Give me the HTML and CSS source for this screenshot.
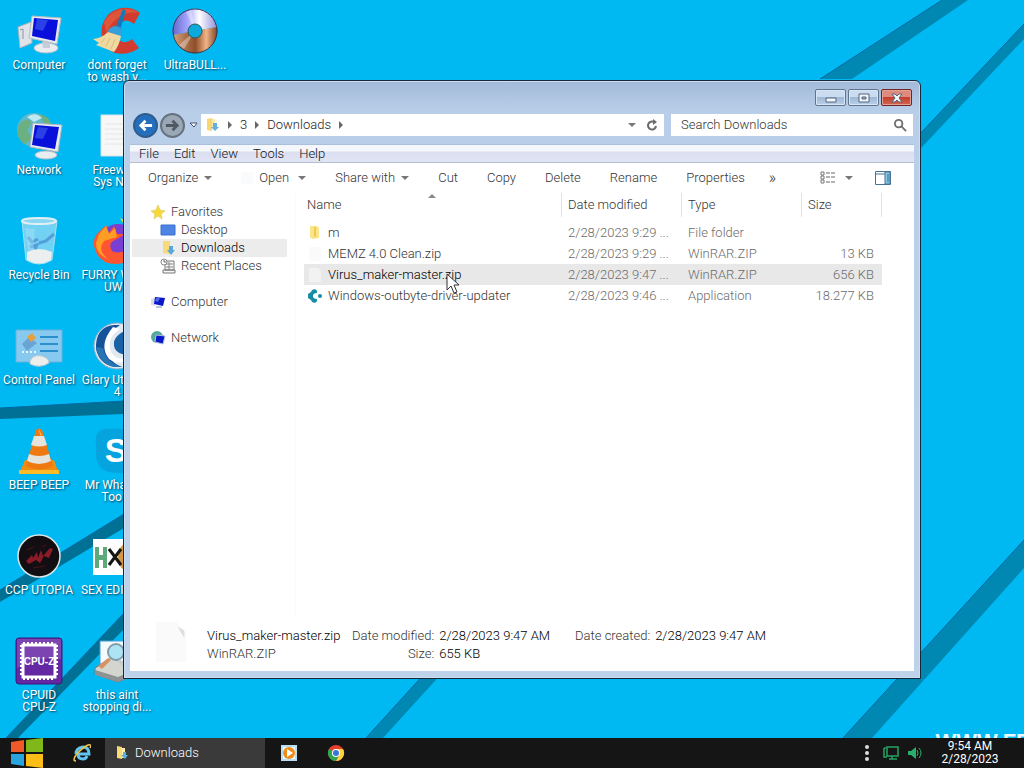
FILE: index.html
```html
<!DOCTYPE html>
<html lang="en">
  <head>
    <meta charset="UTF-8" />
    <meta name="viewport" content="width=device-width, initial-scale=1.0" />
    <title>Downloads</title>
    <link rel="stylesheet" href="styles.css">
  </head>
  <body>
    <main class="desktop">
      <svg class="wallpaper" viewBox="0 0 1024 738" preserveAspectRatio="none" aria-hidden="true">
        <g fill="#0088b3">
          <path d="M942 0H968L852 79H820Z" />
          <path d="M1024 24V39L922 147L900 170V155Z" />
          <path d="M1024 540V568L872 738H843Z" />
          <path d="M426 672H443L383 738H366Z" />
        </g>
        <g fill="#007195">
          <path d="M0 408L124 401V414L0 419Z" />
          <path d="M124 514V528L0 602V590Z" />
          <path d="M124 613V629L18 738H6Z" />
        </g>
        <g fill="none" stroke="#0069a5" stroke-width="1">
          <path d="M942 0L820 79M1024 24L900 155M1024 540L843 738M426 672L366 738M0 408L124 401M124 514L0 590M124 613L6 738" />
        </g>
      </svg>
      <div class="watermark">WWW.FR</div>

      <div class="icons">
        <a class="shortcut" href="#">
          <svg viewBox="0 0 48 48"><path d="M3 20L16 15L17 36L5 41Z" fill="#dfe3e8" stroke="#a9b4c0" /><path d="M5 23L8 22V32" stroke="#8897a8" fill="none" /><ellipse cx="31" cy="41" rx="12" ry="5" fill="#e9edf1" stroke="#b5c1cc" /><path d="M27 33L35 35V41H28Z" fill="#c5ced8" /><path d="M17 9L46 11L42 37L14 31Z" fill="#e8ebee" stroke="#b5bcc5" /><path d="M19 11L43 13L40 34L17 29Z" fill="#0a10db" /><path d="M22 12L33 13L28 24L20 22Z" fill="#4260ee" opacity=".6" /></svg>
          <span>Computer</span>
        </a>
        <a class="shortcut" href="#">
          <svg viewBox="0 0 48 48"><circle cx="19" cy="18" r="17" fill="#5db9c9" /><path d="M5 11C15 4 20 9 12 18L17 27L9 32C3 27 0 19 5 11ZM24 2C36 5 37 11 35 16L28 10Z" fill="#6caf81" /><path d="M12 5Q20 -1 27 6L19 10Z" fill="#d9f5ff" opacity=".8" /><ellipse cx="31" cy="43" rx="11" ry="4" fill="#e8edf0" stroke="#b2beca" /><path d="M18 11L47 13L43 40L15 35Z" fill="#e9ecee" stroke="#abb6bf" /><path d="M20 13L44 15L40 37L17 33Z" fill="#0910d9" /><path d="M23 15L33 16L28 27L20 26Z" fill="#4260ee" opacity=".6" /></svg>
          <span>Network</span>
        </a>
        <a class="shortcut" href="#">
          <svg viewBox="0 0 48 48"><path d="M7 4L11 43Q24 51 37 43L42 4Z" fill="#90d7f4" opacity=".8" stroke="#c9eaf5" /><path d="M12 35Q24 29 37 35L36 43Q24 50 12 43Z" fill="#eceff0" /><path d="M13 20L17 25L23 22M24 26L31 24L39 17M15 30L22 28L20 32" fill="none" stroke="#4c92d3" stroke-width="3" opacity=".8" /><path d="M10 11L20 12L18 34L13 33Z" fill="#b9e7f8" opacity=".35" /><ellipse cx="24" cy="4" rx="17" ry="3" fill="#8bd7f2" stroke="#e0eff4" stroke-width="2" /></svg>
          <span>Recycle Bin</span>
        </a>
        <a class="shortcut" href="#">
          <svg viewBox="0 0 48 48"><path d="M1 8H47V40H1Z" fill="#88c9ef" stroke="#67b1df" /><path d="M7 22L14 15L22 21L12 29Z" fill="#6aa4d5" /><path d="M12 15L17 11L21 16L16 20Z" fill="#e8a03a" /><path d="M25 15H43M25 22H43M25 29H43" stroke="#2990cd" stroke-width="2" /><path d="M7 30H22" stroke="#e4f5ff" stroke-width="2" stroke-dasharray="2 2" /><path d="M15 39Q18 32 27 34Q34 36 34 41Q25 47 15 42Z" fill="#eceeec" stroke="#b6c8d0" /></svg>
          <span>Control Panel</span>
        </a>
        <a class="shortcut" href="#">
          <svg viewBox="0 0 48 48"><path d="M10 33H39L44 47H4Z" fill="#f08e13" /><path d="M4 43H44V47H4Z" fill="#ffba28" /><path d="M21 3Q24 0 27 3L38 39Q25 46 11 39Z" fill="#ed7910" /><path d="M19 9H29L32 18Q24 21 16 18ZM14 27Q24 31 34 27L36 34Q24 40 12 34Z" fill="#e6e2dc" /><path d="M24 2L27 9L25 8Z" fill="#ffc05a" /></svg>
          <span>BEEP BEEP</span>
        </a>
        <a class="shortcut" href="#">
          <svg viewBox="0 0 48 48"><circle cx="24" cy="24" r="21" fill="#130e11" stroke="#dbe5e9" stroke-width="1.5" /><path d="M11 29L17 23L18 26L22 20L23 26L26 18L28 24L35 16L38 17L34 26L29 24L25 31L21 28L14 32Z" fill="#8a1c27" /><path d="M12 18L19 15M27 15L31 13M18 36L30 34" stroke="#4b141e" /></svg>
          <span>CCP UTOPIA</span>
        </a>
        <a class="shortcut" href="#">
          <svg viewBox="0 0 48 48"><rect x="1" y="1" width="46" height="46" rx="3" fill="#6429a2" stroke="#3c1678" /><path d="M2 2H46V22Q20 19 2 31Z" fill="#8a57bb" opacity=".6" /><rect x="8" y="8" width="32" height="32" fill="none" stroke="#fff" stroke-width="3" /><path d="M8 6H40M8 42H40M6 8V40M42 8V40" stroke="#fff" stroke-width="2" stroke-dasharray="2 2" /><text x="24" y="28" class="cpu-text">CPU-Z</text></svg>
          <span>CPUID<br>CPU-Z</span>
        </a>
        <a class="shortcut" href="#">
          <svg viewBox="0 0 48 48"><path d="M47 6L41 17Q33 10 26 17Q19 26 26 33Q33 38 39 32L46 41Q35 49 22 46Q6 40 9 19Q14 3 29 1Q40 0 47 6Z" fill="#d13c2e" /><path d="M11 15Q17 4 30 2Q39 1 45 6Q34 4 25 11Q15 18 14 28Z" fill="#de5539" /><path d="M30 2L33 4L27 23L22 22Z" fill="#1479bc" /><path d="M16 22Q22 16 29 22L28 29L15 25Z" fill="#359fda" /><path d="M15 25L28 29Q26 39 21 45L3 38L6 36L0 32Q9 31 15 25Z" fill="#efd9a0" /><path d="M12 31L8 36M17 31L13 39M22 32L18 42" stroke="#d7bd81" /></svg>
          <span>dont forget<br>to wash y...</span>
        </a>
        <a class="shortcut" href="#">
          <svg viewBox="0 0 48 48"><path d="M8 3H40V44H8Z" fill="#f7f7f7" stroke="#d5e4e9" /><path d="M12 12H36M12 17H33M12 22H36M12 27H35M12 32H34" stroke="#e6e6e6" /></svg>
          <span>Freeware<br>Sys Note</span>
        </a>
        <a class="shortcut" href="#">
          <svg viewBox="0 0 48 48"><circle cx="25" cy="26" r="19" fill="#793fd2" /><path d="M27 1Q44 8 43 25L34 12Z" fill="#ffd72c" /><path d="M5 16L13 8L16 16L21 9L24 17L32 17Q28 20 20 24Q15 27 19 34Q31 40 44 22Q45 44 25 47Q5 48 1 29Q0 21 5 16Z" fill="#ff5631" /><path d="M6 17L13 9L16 17L22 11L24 20L11 24Q3 35 17 43Q3 38 3 26Z" fill="#ff9e25" /></svg>
          <span>FURRY WEBS<br>UWU</span>
        </a>
        <a class="shortcut" href="#">
          <svg viewBox="0 0 48 48"><circle cx="24" cy="24" r="23" fill="#e0e9ef" stroke="#8db1cc" /><path d="M21 3Q2 5 3 27Q7 46 29 45Q11 38 14 20Q17 9 27 3Z" fill="#155299" /><path d="M3 25Q6 41 20 45L29 45Q13 41 10 26Z" fill="#2776b4" /><path d="M27 7Q13 16 18 30Q24 40 40 35Q27 45 16 37Q5 23 20 5Z" fill="#fff" /><path d="M34 8Q17 15 22 27Q28 36 42 30Q45 17 34 8Z" fill="#1762a5" /></svg>
          <span>Glary Utilities<br>4</span>
        </a>
        <a class="shortcut" href="#">
          <svg viewBox="0 0 48 48"><path d="M3 18Q0 0 19 2Q46 0 46 24Q50 48 27 46Q3 47 3 27Z" fill="#06a4df" /><text x="23" y="35" class="skype-text">S</text></svg>
          <span>Mr Whatsap<br>Too P</span>
        </a>
        <a class="shortcut" href="#">
          <svg viewBox="0 0 48 48"><path d="M0 7H48V43H0Z" fill="#fff" /><path d="M2 15H6V23H10V15H14V36H10V28H6V36H2Z" fill="#5ea979" /><ellipse cx="33" cy="25" rx="8" ry="13" fill="#d69642" /><path d="M16 17L28 33M28 17L16 33" stroke="#151515" stroke-width="3" /></svg>
          <span>SEX EDITORS</span>
        </a>
        <a class="shortcut" href="#">
          <svg viewBox="0 0 48 48"><path d="M7 4H40V27H7Z" fill="#f5faff" stroke="#3f9dd7" /><path d="M2 31L18 21L44 30V37L25 45L2 37Z" fill="#d5d5cf" stroke="#777" /><path d="M2 33L25 40L44 32V37L25 45L2 38Z" fill="#8f9294" /><path d="M5 29L15 21L18 23L9 32Z" fill="#d69466" /><circle cx="23" cy="15" r="8" fill="#ace4f5" stroke="#829da9" stroke-width="2" /><path d="M26 23L36 34" stroke="#c5cbd0" stroke-width="3" /></svg>
          <span>this aint<br>stopping di...</span>
        </a>
        <a class="shortcut" href="#">
          <svg viewBox="0 0 48 48"><defs><linearGradient id="disc-top" x1="0" x2="1"><stop stop-color="#6569ce" /><stop offset=".35" stop-color="#a8a8ff" /><stop offset=".6" stop-color="#fff" /><stop offset="1" stop-color="#9291e0" /></linearGradient><linearGradient id="disc-low" x1="0" x2="1"><stop stop-color="#d4a17d" /><stop offset=".5" stop-color="#8e4d28" /><stop offset=".75" stop-color="#f1b486" /><stop offset="1" stop-color="#7c4429" /></linearGradient></defs><path d="M2 28A22 22 0 1 1 46 20Z" fill="url(#disc-top)" /><path d="M2 28A22 22 0 0 0 46 20Z" fill="url(#disc-low)" /><path d="M24 24L15 5L20 3ZM24 24L8 38L13 42Z" fill="#fff" opacity=".35" /><circle cx="24" cy="24" r="22" fill="none" stroke="#34374d" /><circle cx="24" cy="24" r="7" fill="#0aabdc" stroke="#355" /></svg>
          <span>UltraBULL...</span>
        </a>
      </div>

      <section class="window" aria-label="Downloads">
        <header class="titlebar">
          <button class="win-btn" aria-label="Minimize"><svg viewBox="0 0 12 12"><path d="M1 6H11V10H1Z" /></svg></button>
          <button class="win-btn" aria-label="Maximize"><svg viewBox="0 0 12 12"><path d="M1 2H11V10H1ZM4 5H8V7H4Z" /></svg></button>
          <button class="win-btn close" aria-label="Close"><svg viewBox="0 0 12 12"><path d="M1 2H4L6 4L8 2H11L8 6L11 10H8L6 8L4 10H1L4 6Z" /></svg></button>
        </header>

        <div class="navbar">
          <button class="round back" aria-label="Back"><svg viewBox="0 0 16 16"><path d="M15 8H3M8 3L3 8L8 13" /></svg></button>
          <button class="round forward" aria-label="Forward"><svg viewBox="0 0 16 16"><path d="M1 8H13M8 3L13 8L8 13" /></svg></button>
          <button class="recent" aria-label="Recent pages"><svg viewBox="0 0 9 6"><path d="M1 1H8L5 5Z" fill="#fff" stroke="#41536d" /></svg></button>
          <div class="address">
            <svg class="small-icon" viewBox="0 0 16 16"><path d="M3 2L8 1V14L3 13Z" fill="#f5d873" /><path d="M8 2H11V10H8Z" fill="#f8e8a4" /><path d="M9 6H13V10H15L11 14L7 10H9Z" fill="#66aee0" /></svg>
            <i class="tri-right"></i>
            <button>3</button>
            <i class="tri-right"></i>
            <button>Downloads</button>
            <i class="tri-right"></i>
            <span class="spacer"></span>
            <i class="tri-down"></i>
            <button class="refresh" aria-label="Refresh"><svg viewBox="0 0 12 12"><path d="M8 3A4 4 0 1 0 10 7" fill="none" stroke="#6b6b6b" stroke-width="2" /><path d="M7 0L11 3L7 6Z" fill="#6b6b6b" /></svg></button>
          </div>
          <label class="search">
            <input type="text" placeholder="Search Downloads" aria-label="Search Downloads" />
            <svg viewBox="0 0 14 14"><circle cx="5" cy="5" r="4" /><path d="M8 8L13 13" /></svg>
          </label>
        </div>

        <nav class="menubar">
          <button>File</button>
          <button>Edit</button>
          <button>View</button>
          <button>Tools</button>
          <button>Help</button>
        </nav>

        <div class="content">
          <div class="toolbar">
            <button>Organize <i class="tri-down"></i></button>
            <button><span class="blank-icon"></span>Open <i class="tri-down open-arrow"></i></button>
            <button>Share with <i class="tri-down"></i></button>
            <button>Cut</button>
            <button>Copy</button>
            <button>Delete</button>
            <button>Rename</button>
            <button>Properties</button>
            <button class="more" aria-label="More">»</button>
            <span class="spacer"></span>
            <button class="views" aria-label="Change your view"><svg viewBox="0 0 16 14" width="16" height="14"><path d="M1 1H4V4H1ZM1 5H4V8H1ZM1 9H4V12H1Z" fill="none" stroke="#777" /><path d="M6 2H10M11 2H15M6 6H10M11 6H15M6 11H10M11 11H15" stroke="#666" /></svg><i class="tri-down"></i></button>
            <button aria-label="Show the preview pane"><svg viewBox="0 0 16 14" width="16" height="14"><path d="M.5 .5H15.5V13.5H.5Z" fill="#fff" stroke="#477393" /><path d="M1 3H10" stroke="#477393" /><path d="M10 1H15V13H10Z" fill="#88c8e7" stroke="#477393" /><path d="M13 3V11" stroke="#2e6c98" /></svg></button>
          </div>

          <div class="panes">
            <aside class="sidebar">
              <a href="#"><svg class="small-icon" viewBox="0 0 16 16"><path d="M8 1L10 6L15 7L11 10L12 15L8 12L4 15L5 10L1 7L6 6Z" fill="#f7d936" stroke="#ead377" /></svg>Favorites</a>
              <a class="sub" href="#"><svg class="small-icon" viewBox="0 0 16 16"><path d="M1 3H15V13H1Z" fill="#4f83e4" stroke="#3770d0" /></svg>Desktop</a>
              <a class="sub selected" href="#"><svg class="small-icon" viewBox="0 0 16 16"><path d="M3 1H10V14L3 13Z" fill="#f8da7c" /><path d="M9 6H13V10H15L11 15L7 10H9Z" fill="#59a8dd" /></svg>Downloads</a>
              <a class="sub" href="#"><svg class="small-icon" viewBox="0 0 16 16"><path d="M5 3H14V12H5ZM3 12H15V15H3Z" fill="#f5f5f5" stroke="#777" /><path d="M6 6H13M6 9H13M9 4V12" stroke="#888" /><circle cx="4" cy="4" r="3" fill="#fff" stroke="#888" /><path d="M4 2V4H6" fill="none" stroke="#666" /></svg>Recent Places</a>
              <a class="group" href="#"><svg class="small-icon" viewBox="0 0 16 16"><path d="M1 5L5 4V12L1 11Z" fill="#d8dde5" /><path d="M5 3L15 4L13 12L4 10Z" fill="#0a16c9" /><path d="M6 4L10 4L8 8L5 7Z" fill="#4a67e4" /><path d="M6 13H12" stroke="#bcc8d5" stroke-width="2" /></svg>Computer</a>
              <a class="group" href="#"><svg class="small-icon" viewBox="0 0 16 16"><circle cx="7" cy="7" r="6" fill="#55a99b" /><path d="M6 5L15 6L13 14L5 12Z" fill="#0a16c9" stroke="#aec0dd" /></svg>Network</a>
            </aside>

            <div class="files">
              <table>
                <colgroup><col class="col-name" /><col class="col-date" /><col class="col-type" /><col class="col-size" /></colgroup>
                <thead>
                  <tr><th class="sorted">Name</th><th>Date modified</th><th>Type</th><th>Size</th></tr>
                </thead>
                <tbody>
                  <tr><td><span class="file"><svg class="small-icon" viewBox="0 0 16 16"><path d="M3 1H10L12 3V13L5 14L3 12Z" fill="#fbe58b" /><path d="M7 2H9V12H7Z" fill="#eecb50" /></svg>m</span></td><td>2/28/2023 9:29 ...</td><td>File folder</td><td></td></tr>
                  <tr><td><span class="file"><svg class="small-icon" viewBox="0 0 16 16"><path d="M2 1H12L14 3V15H2Z" fill="#fafafa" /></svg>MEMZ 4.0 Clean.zip</span></td><td>2/28/2023 9:29 ...</td><td>WinRAR.ZIP</td><td>13 KB</td></tr>
                  <tr class="selected"><td><span class="file"><svg class="small-icon" viewBox="0 0 16 16"><path d="M2 1H11L14 4V15H2Z" fill="#f2f2f2" /></svg>Virus_maker-master.zip</span></td><td>2/28/2023 9:47 ...</td><td>WinRAR.ZIP</td><td>656 KB</td></tr>
                  <tr><td><span class="file"><svg class="small-icon" viewBox="0 0 16 16"><path d="M8 1L10 3V5Q6 5 6 8Q6 11 10 11V13L8 15L5 14L4 12L1 10V6L4 4L5 2Z" fill="#168da5" /><circle cx="13" cy="8" r="2" fill="#168da5" /></svg>Windows-outbyte-driver-updater</span></td><td>2/28/2023 9:46 ...</td><td>Application</td><td>18.277 KB</td></tr>
                </tbody>
              </table>
            </div>
          </div>

          <footer class="details">
            <svg class="preview" viewBox="0 0 32 42"><path d="M0 0H22L32 12V42H0Z" fill="#fafafa" /><path d="M23 5L30 9V17Z" fill="#ddd" /></svg>
            <div class="detail-grid">
              <b>Virus_maker-master.zip</b><span class="key">Date modified:</span><b>2/28/2023 9:47 AM</b><span class="key created">Date created:</span><b>2/28/2023 9:47 AM</b>
              <span>WinRAR.ZIP</span><span class="key">Size:</span><b>655 KB</b>
            </div>
          </footer>
        </div>
      </section>

      <svg class="cursor" viewBox="0 0 14 22" aria-hidden="true"><path d="M1 1V17L5 13L8 20L11 19L8 12H13Z" fill="#fff" stroke="#333" /></svg>
    </main>

    <footer class="taskbar">
      <button class="start" aria-label="Start"><svg viewBox="0 0 32 30"><path d="M0 4L13 2V14H0Z" fill="#f05a28" /><path d="M15 2L32 0V14H15Z" fill="#80b719" /><path d="M0 16H13V28L0 26Z" fill="#29a4dd" /><path d="M15 16H32V30L15 28Z" fill="#fcbd16" /></svg></button>
      <button class="launch" aria-label="Internet Explorer"><svg viewBox="0 0 18 18"><path d="M14 12Q13 15 10 15Q5 15 5 10H16Q16 3 10 3Q3 4 3 10" fill="none" stroke="#63c4f0" stroke-width="3" /><path d="M3 17Q-1 17 3 11Q9 4 15 1Q19 0 17 4" fill="none" stroke="#f5c645" stroke-width="1.5" /></svg></button>
      <button class="task"><svg class="small-icon" viewBox="0 0 16 16"><path d="M3 1L8 2V14L3 13Z" fill="#f9db75" /><path d="M8 3H11V13H8Z" fill="#ffeeae" /><path d="M9 7H12V10H14L11 14L7 10H9Z" fill="#5aaee0" /></svg>Downloads</button>
      <button class="launch" aria-label="Media Player"><svg viewBox="0 0 18 18"><path d="M1 1H17V17H1Z" fill="#b9ddf4" /><path d="M3 3H15V15H3Z" fill="#f6fbff" /><circle cx="9" cy="9" r="6" fill="#ed8d18" /><path d="M7 5L13 9L7 13Z" fill="#fff" /></svg></button>
      <button class="launch" aria-label="Chrome"><svg viewBox="0 0 18 18"><circle cx="9" cy="9" r="8" fill="#e5402f" /><path d="M9 9L2 5A8 8 0 0 0 9 17L12 11Z" fill="#30a653" /><path d="M9 9V5H16A8 8 0 0 1 9 17L13 10Z" fill="#ffd13d" /><circle cx="9" cy="9" r="4" fill="#fff" /><circle cx="9" cy="9" r="3" fill="#3675d9" /></svg></button>
      <span class="spacer"></span>
      <button class="tray" aria-label="Hidden icons"><svg viewBox="0 0 16 18"><g fill="#ddd"><circle cx="8" cy="3" r="2" /><circle cx="8" cy="9" r="2" /><circle cx="8" cy="15" r="2" /></g></svg></button>
      <button class="tray" aria-label="Network"><svg viewBox="0 0 16 18"><path d="M4 3H15V12H4ZM9 12V15M6 15H14M1 4V13H4M1 4H3" fill="none" stroke="#23a260" stroke-width="1.5" /></svg></button>
      <button class="tray" aria-label="Volume"><svg viewBox="0 0 16 18"><path d="M1 7H4L9 3V15L4 11H1Z" fill="#2aaf68" /><path d="M10 6Q12 9 10 12M12 4Q16 9 12 14" fill="none" stroke="#2aaf68" /></svg></button>
      <button class="clock">9:54 AM<br>2/28/2023</button>
    </footer>
  </body>
</html>
```

FILE: styles.css
```css
* {
  box-sizing: border-box;
}

body {
  margin: 0;
  height: 100vh;
  display: grid;
  grid-template-rows: 1fr 30px;
  overflow: hidden;
  font: 300 13px/18px Roboto, "Liberation Sans", sans-serif;
  color: #333;
}

button {
  margin: 0;
  padding: 0;
  border: 0;
  background: none;
  color: inherit;
  font: inherit;
}

a {
  color: inherit;
  text-decoration: none;
}

.spacer {
  flex: 1;
}

/* desktop */
.desktop {
  position: relative;
  min-height: 0;
  overflow: hidden;
  background: #00b9f2;
}

.wallpaper {
  position: absolute;
  width: 100%;
  height: 100%;
}

.watermark {
  position: absolute;
  right: -8px;
  bottom: -14px;
  color: #e9faff;
  font: bold 22px/20px "Liberation Sans", sans-serif;
}

.icons {
  position: relative;
  display: grid;
  grid-template-rows: repeat(7, 105px);
  grid-auto-columns: 78px;
  grid-auto-flow: column;
  width: max-content;
  padding-top: 7px;
}

.shortcut {
  display: flex;
  flex-direction: column;
  align-items: center;
  gap: 4px;
  color: #fff;
  font-size: 12px;
  font-weight: 400;
  line-height: 12px;
  text-align: center;
  white-space: nowrap;
  text-shadow: 1px 1px 2px #003c5c;
}

.shortcut svg {
  width: 48px;
  height: 48px;
}

.cpu-text {
  fill: #fff;
  font: bold 10px "Liberation Sans", sans-serif;
  text-anchor: middle;
  text-shadow: none;
}

.skype-text {
  fill: #fff;
  font: bold 34px "Liberation Sans", sans-serif;
  text-anchor: middle;
  text-shadow: none;
}

/* window */
.window {
  position: absolute;
  inset: 80px 103px 59px 123px;
  display: flex;
  flex-direction: column;
  padding: 0 6px 7px;
  border: 1px solid #17283b;
  border-radius: 6px 6px 0 0;
  background: linear-gradient(#a3bad8, #b9cfe9 32px, #bed2ea);
  box-shadow: inset 0 0 0 1px #c9def2;
}

.titlebar {
  display: flex;
  justify-content: flex-end;
  gap: 2px;
  padding: 8px 2px 5px;
}

.win-btn {
  display: flex;
  align-items: center;
  justify-content: center;
  width: 31px;
  height: 17px;
  border: 1px solid #60758f;
  border-radius: 2px;
  background: linear-gradient(#cbdcf0 45%, #9eb8d5 50%, #bbd0e8);
  box-shadow: inset 0 0 0 1px #d7e6f5;
}

.win-btn svg {
  width: 12px;
  height: 12px;
  fill: #f4f7fb;
  fill-rule: evenodd;
  stroke: #53657c;
}

.win-btn.close {
  border-color: #6d2526;
  background: linear-gradient(#dd8b7e 45%, #c63e30 50%, #d16851);
  box-shadow: inset 0 0 0 1px #e4a093;
}

.navbar {
  display: flex;
  align-items: center;
  gap: 2px;
  height: 28px;
  padding: 0 1px 0 3px;
}

.round {
  display: flex;
  align-items: center;
  justify-content: center;
  width: 25px;
  height: 25px;
  border: 2px solid #315b8b;
  border-radius: 50%;
  background: #236fbd;
}

.round svg {
  flex: none;
  width: 15px;
  height: 15px;
  fill: none;
  stroke: #fff;
  stroke-width: 3;
}

.forward {
  border-color: #66717d;
  background: #9aa7b5;
}

.forward svg {
  stroke: #4f5963;
}

.recent {
  display: flex;
  justify-content: center;
  width: 12px;
}

.recent svg {
  width: 9px;
  height: 6px;
}

.address,
.search {
  display: flex;
  align-items: center;
  height: 22px;
  background: #fff;
}

.address {
  flex: 1;
  gap: 8px;
  padding: 0 6px 0 3px;
  color: #222;
}

.search {
  width: 242px;
  margin-left: 5px;
  padding: 0 6px 0 10px;
}

.search input {
  flex: 1;
  min-width: 0;
  padding: 0;
  border: 0;
  outline: 0;
  background: none;
  font: inherit;
}

.search input::placeholder {
  color: #333;
  opacity: 1;
}

.search svg {
  width: 13px;
  height: 13px;
  fill: none;
  stroke: #707070;
  stroke-width: 2;
}

.small-icon {
  flex: none;
  width: 16px;
  height: 16px;
}

.tri-right,
.tri-down {
  flex: none;
  border: 4px solid transparent;
}

.tri-right {
  width: 4px;
  border-width: 4px 0 4px 4px;
  border-left-color: #666;
}

.tri-down {
  height: 4px;
  border-width: 4px 4px 0;
  border-top-color: #777;
}

.refresh {
  display: flex;
  margin-left: 2px;
}

.refresh svg {
  width: 12px;
  height: 12px;
}

.menubar {
  display: flex;
  gap: 15px;
  height: 19px;
  margin-top: 5px;
  padding-left: 9px;
  border-top: 1px solid #aabfda;
  border-bottom: 1px solid #b4bfd3;
  background: linear-gradient(#f4f8fd 6px, #dcdff0 7px, #e1e4f3);
  color: #101522;
}

/* explorer content */
.content {
  flex: 1;
  min-height: 0;
  display: flex;
  flex-direction: column;
  background: #fff;
}

.toolbar {
  display: flex;
  align-items: center;
  gap: 29px;
  height: 30px;
  padding: 0 23px 0 18px;
  white-space: nowrap;
}

.toolbar button {
  display: flex;
  align-items: center;
  gap: 6px;
}

.blank-icon {
  width: 12px;
  height: 12px;
  background: #fafbfc;
}

.toolbar .open-arrow {
  margin-left: 3px;
}

.toolbar .more {
  margin-left: -5px;
  font-size: 16px;
}

.toolbar .spacer {
  margin-left: -29px;
}

.toolbar .views {
  gap: 9px;
  margin-right: -7px;
}

.panes {
  flex: 1;
  min-height: 0;
  display: flex;
}

.sidebar {
  width: 166px;
  padding: 10px 8px 0 2px;
  border-right: 1px solid #fafafa;
}

.sidebar a {
  display: flex;
  align-items: center;
  gap: 5px;
  height: 18px;
  padding-left: 18px;
}

.sidebar .sub {
  padding-left: 28px;
}

.sidebar .group {
  margin-top: 18px;
}

.sidebar .selected {
  background: #ececec;
  color: #000;
}

.files {
  flex: 1;
  padding-left: 8px;
}

table {
  width: 578px;
  table-layout: fixed;
  border-spacing: 0;
}

.col-date,
.col-type {
  width: 120px;
}

.col-size {
  width: 80px;
}

th {
  position: relative;
  height: 24px;
  padding: 0 6px;
  border-right: 1px solid #e2e2e2;
  font-weight: inherit;
  text-align: left;
}

th:first-child {
  padding-left: 3px;
}

/* sort arrow sits on the top edge of the column */
.sorted::before {
  content: "";
  position: absolute;
  top: 1px;
  left: 50%;
  margin-left: -5px;
  border: 4px solid transparent;
  border-width: 0 4px 4px;
  border-bottom-color: #888;
}

tbody::before {
  content: "";
  display: block;
  height: 5px;
}

td {
  height: 21px;
  padding: 0 6px;
  color: #6c6c6c;
  white-space: nowrap;
}

td:first-child {
  padding-left: 3px;
  color: #333;
}

td:last-child {
  padding-right: 8px;
  text-align: right;
}

tr.selected td {
  background: #e8e8e8;
}

tr.selected td:first-child {
  color: #000;
}

.file {
  display: flex;
  align-items: center;
  gap: 5px;
}

.details {
  display: flex;
  align-items: flex-start;
  gap: 20px;
  padding: 4px 25px 8px;
}

.preview {
  width: 32px;
  height: 40px;
}

.detail-grid {
  display: grid;
  grid-template-columns: 140px repeat(4, auto);
  gap: 0 5px;
  padding-top: 5px;
}

.detail-grid b {
  color: #000;
  font-weight: inherit;
}

.key {
  text-align: right;
}

.created {
  padding-left: 20px;
}

.cursor {
  position: absolute;
  left: 446px;
  top: 273px;
  width: 14px;
  height: 22px;
}

/* taskbar */
.taskbar {
  position: relative;
  display: flex;
  align-items: stretch;
  background: #151515;
  color: #fff;
}

.taskbar button {
  display: flex;
  align-items: center;
}

.start {
  width: 58px;
  padding-left: 11px;
}

.start svg {
  width: 32px;
  height: 30px;
}

.launch {
  justify-content: center;
  width: 47px;
}

.launch svg {
  width: 18px;
  height: 18px;
}

.task {
  gap: 5px;
  width: 160px;
  padding-left: 9px;
  background: #3a3a3a;
}

.tray {
  width: 24px;
  justify-content: center;
}

.tray svg {
  width: 16px;
  height: 18px;
}

.taskbar .clock {
  justify-content: center;
  width: 86px;
  margin-right: 11px;
  font-size: 12px;
  font-weight: 400;
  line-height: 13px;
}
```
